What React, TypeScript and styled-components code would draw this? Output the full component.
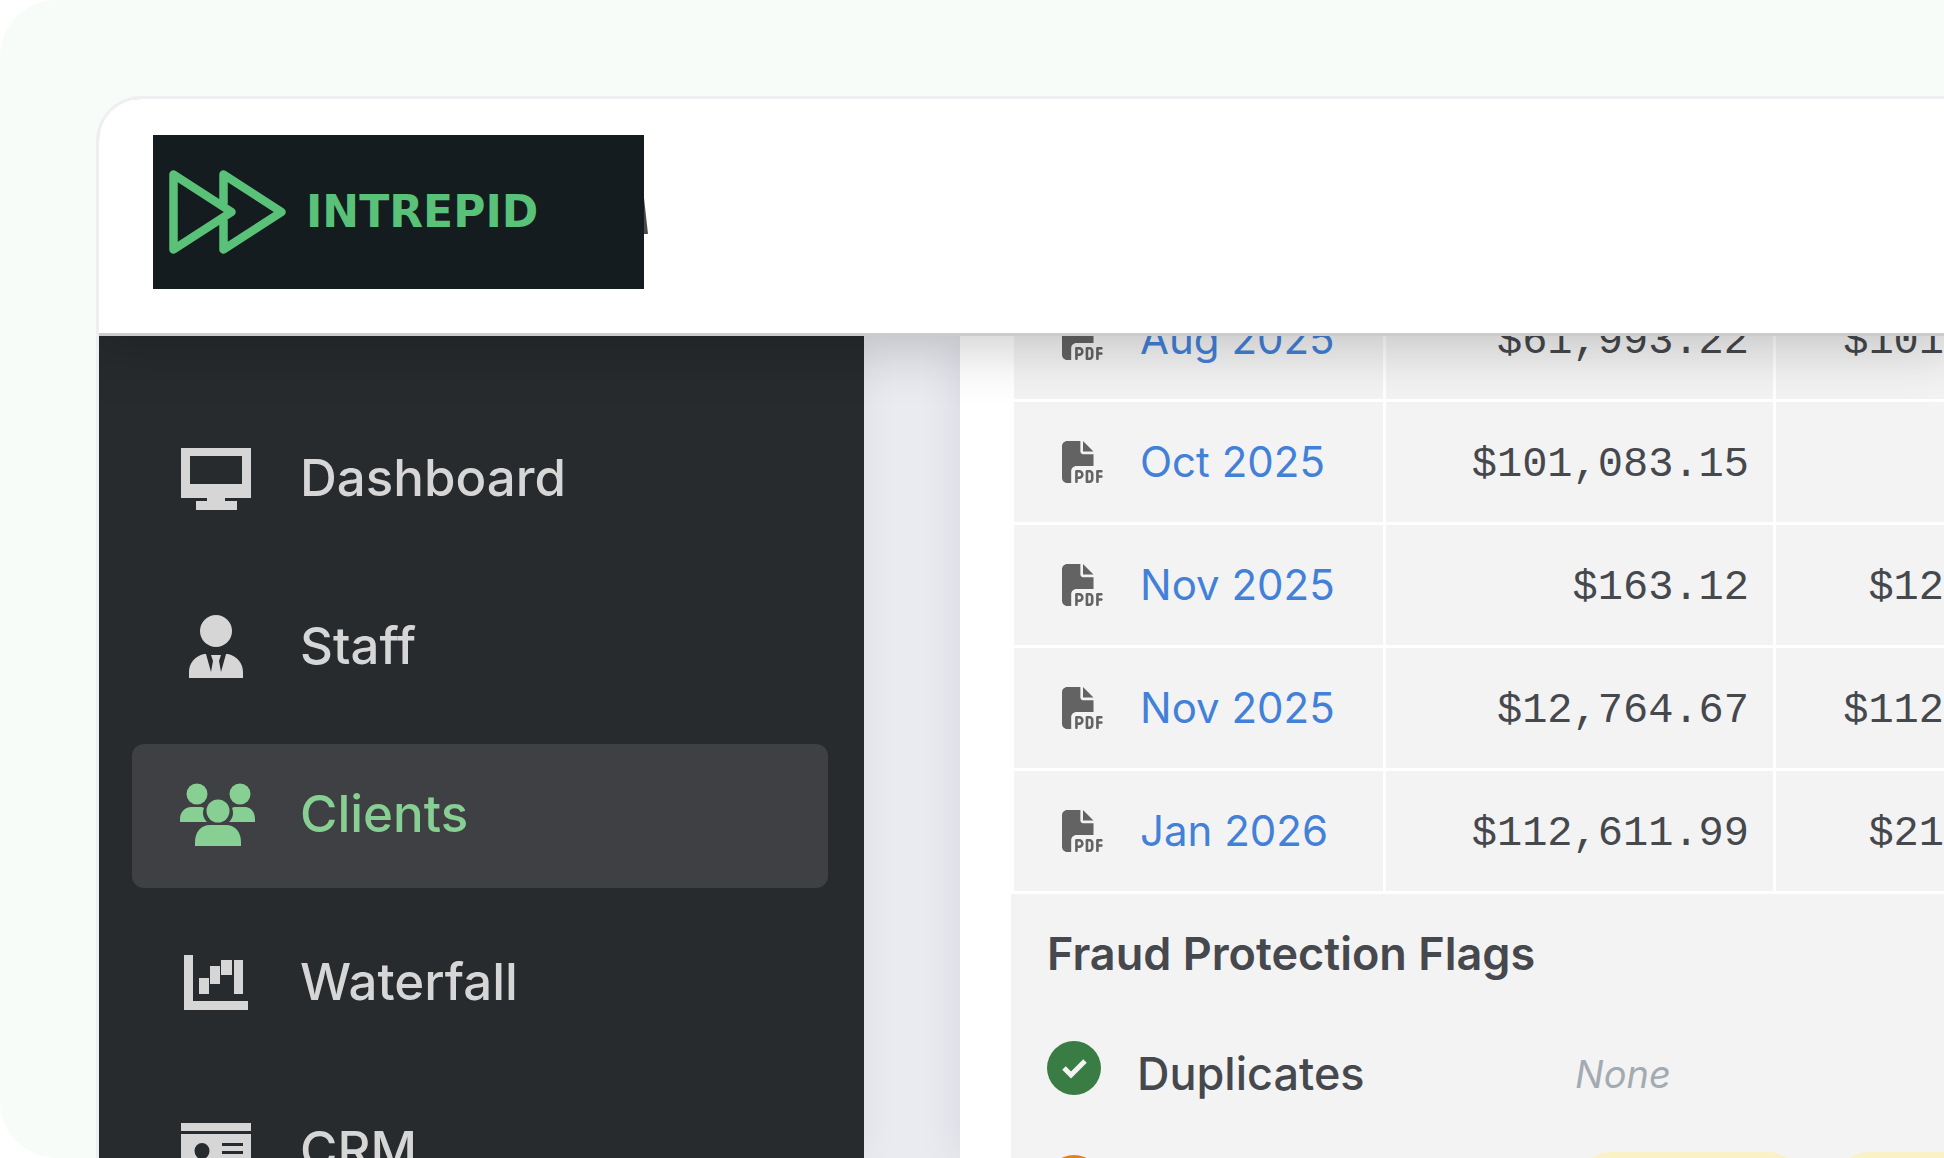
import React from "react";
import styled, { createGlobalStyle } from "styled-components";
import { FaFilePdf } from "react-icons/fa6";

const GlobalStyle = createGlobalStyle`
  *, *::before, *::after { box-sizing: border-box; }
  body {
    margin: 0;
    background: #ffffff;
    font-family: Inter, "Noto Sans", sans-serif;
    color: #45484c;
  }
`;

const Page = styled.div`
  height: 100vh;
  padding: 96px 0 0 96px;
  overflow: hidden;
  background: #f7fcf8;
  border-radius: 57px 0 0 57px;
`;

const Window = styled.div`
  display: flex;
  flex-direction: column;
  height: 100%;
  overflow: hidden;
  background: #eaebf0;
  border: solid #efeef3;
  border-width: 3px 0 0 3px;
  border-radius: 45px 0 0 0;
`;

const Header = styled.header`
  position: relative;
  z-index: 2;
  flex: none;
  display: flex;
  height: 237px;
  padding: 36px 54px;
  background: #ffffff;
  border-bottom: 3px solid #cacbca;
  box-shadow: 0 0 54px 12px rgba(0, 0, 0, 0.2);
`;

const Logo = styled.a`
  position: relative;
  display: flex;
  align-items: center;
  gap: 18px;
  width: 491px;
  height: 154px;
  padding-left: 15px;
  background: #151c1f;
  color: #5ac178;
  text-decoration: none;
`;

const LogoMark = styled.svg`
  flex: none;
  width: 120px;
  height: 90px;
`;

const LogoName = styled.span`
  font-family: "DejaVu Sans", sans-serif;
  font-size: 44px;
  line-height: 48px;
  font-weight: 700;
`;

const LogoEdge = styled.svg`
  position: absolute;
  left: 100%;
  top: 63px;
  width: 4px;
  height: 36px;
`;

const Body = styled.div`
  flex: 1;
  min-height: 0;
  display: flex;
  gap: 96px;
  overflow: hidden;
`;

const Sidebar = styled.nav`
  flex: none;
  display: flex;
  flex-direction: column;
  gap: 24px;
  width: 765px;
  padding: 72px 36px 0 33px;
  background: #272b2d;
  box-shadow: 0 0 36px rgba(20, 20, 50, 0.06);
`;

const NavItem = styled.a<{ $active?: boolean }>`
  flex: none;
  display: flex;
  align-items: center;
  gap: 48px;
  height: 144px;
  padding-left: 48px;
  border-radius: 12px;
  background: ${(p) => (p.$active ? "#3e4043" : "transparent")};
  color: ${(p) => (p.$active ? "#87cf93" : "#d6d6d6")};
  text-decoration: none;
`;

const NavIcon = styled.svg`
  flex: none;
  width: 72px;
  height: 72px;
  overflow: visible;
  fill: currentColor;
`;

const NavLabel = styled.span`
  padding-bottom: 4px;
  font-size: 51px;
  line-height: 60px;
  font-weight: 500;
`;

const Panel = styled.main`
  flex: 1;
  min-width: 0;
  padding-left: 51px;
  background: #ffffff;
  box-shadow: 0 0 42px rgba(20, 20, 50, 0.09);
`;

const Statements = styled.table`
  width: calc(100% + 3px);
  margin-top: -60px;
  table-layout: fixed;
  border-spacing: 3px;
`;

const MonthCol = styled.col`
  width: 369px;
`;

const AmountCol = styled.col`
  width: 387px;
`;

const MonthCell = styled.td`
  height: 120px;
  padding: 0 0 0 48px;
  background: #f3f3f3;
`;

const MonthLine = styled.div`
  display: flex;
  align-items: center;
  gap: 36px;
  color: #636363;
`;

const MonthLink = styled.a`
  color: #4380d8;
  font-size: 42px;
  line-height: 48px;
  text-decoration: none;
`;

const AmountCell = styled.td<{ $flush?: boolean }>`
  padding: 6px ${(p) => (p.$flush ? 0 : 24)}px 0 0;
  background: #f3f3f3;
  color: #45484c;
  font-family: "Liberation Mono", monospace;
  font-size: 42px;
  line-height: 48px;
  text-align: right;
`;

const Flags = styled.section`
  padding: 30px 0 48px 36px;
  background: #f3f3f3;
`;

const FlagsTitle = styled.h2`
  margin: 0 0 57px;
  font-size: 45px;
  line-height: 60px;
  font-weight: 600;
`;

const FlagList = styled.div`
  display: flex;
  flex-direction: column;
  gap: 48px;
`;

const FlagRow = styled.div`
  display: flex;
  height: 66px;
`;

const FlagIcon = styled.svg`
  flex: none;
  width: 54px;
  height: 54px;
  margin-right: 36px;
`;

const FlagLabel = styled.span`
  flex: none;
  width: 438px;
  font-size: 45px;
  line-height: 66px;
  font-weight: 500;
`;

const FlagNone = styled.em`
  color: #a3abb2;
  font-size: 38px;
  line-height: 66px;
`;

const Pills = styled.div`
  display: flex;
  align-items: center;
  gap: 30px;
`;

const Pill = styled.span`
  flex: none;
  width: 228px;
  height: 72px;
  border-radius: 36px;
  background: #fbf1c6;
`;

const DashboardIcon = () => (
  <NavIcon viewBox="0 0 72 72" aria-hidden="true">
    <path fillRule="evenodd" d="M1 4H71V54H45V57H57V66H16V57H27V54H1ZM10 12V40H62V12Z" />
  </NavIcon>
);

const StaffIcon = () => (
  <NavIcon viewBox="0 0 72 72" aria-hidden="true">
    <circle cx="36" cy="19" r="16" />
    <path d="M9 66V60C9 51 15 44 24 42H26L31 60L33 49L31 43H41L39 49L41 60L46 42H48C57 44 63 51 63 60V66Z" />
  </NavIcon>
);

const ClientsIcon = () => (
  <NavIcon viewBox="0 0 72 72" aria-hidden="true">
    <circle cx="17" cy="14" r="10.5" />
    <circle cx="60" cy="14" r="10.5" />
    <circle cx="38" cy="31" r="11.5" />
    <path d="M0 42V39C0 32 5 27 11 27H20C22 27 23 27 24 28C22 33 23 38 27 42Z" />
    <path d="M75 42V39C75 32 71 27 65 27H56C54 27 53 27 52 28C54 33 53 38 49 42Z" />
    <path d="M15 66V62C15 52 21 45 30 45H46C55 45 61 52 61 62V66Z" />
  </NavIcon>
);

const WaterfallIcon = () => (
  <NavIcon viewBox="0 0 72 72" aria-hidden="true">
    <path d="M4 7H13V53H68V62H4Z" />
    <path d="M19 30H29V46H19ZM30 18H40V36H30ZM41 12H52V27H41ZM54 12H63V46H54Z" />
  </NavIcon>
);

const CrmIcon = () => (
  <NavIcon viewBox="0 0 72 72" aria-hidden="true">
    <path d="M1 7H71V15H1Z" />
    <path
      fillRule="evenodd"
      d="M1 18H71V66H1ZM22 27A7.5 8 0 1 0 22 43A7.5 8 0 1 0 22 27ZM42 27H63V30H42ZM42 35H63V38H42ZM10 57C10 50 14 47 18 47H27C31 47 35 50 35 57Z"
    />
  </NavIcon>
);

const navItems = [
  { label: "Dashboard", Icon: DashboardIcon },
  { label: "Staff", Icon: StaffIcon },
  { label: "Clients", Icon: ClientsIcon, active: true },
  { label: "Waterfall", Icon: WaterfallIcon },
  { label: "CRM", Icon: CrmIcon },
];

const statements = [
  { month: "Aug 2025", amount: "$61,993.22", next: "$101" },
  { month: "Oct 2025", amount: "$101,083.15", next: "" },
  { month: "Nov 2025", amount: "$163.12", next: "$12" },
  { month: "Nov 2025", amount: "$12,764.67", next: "$112" },
  { month: "Jan 2026", amount: "$112,611.99", next: "$21" },
];

export default function App() {
  return (
    <>
      <GlobalStyle />
      <Page>
        <Window>
          <Header>
            <Logo href="#">
              <LogoMark viewBox="0 0 120 90" fill="none" stroke="currentColor" strokeWidth="8.5" strokeLinejoin="round" aria-hidden="true">
                <path d="M5.5 7.5V82.5L63.5 45Z" />
                <path d="M55.5 37V7.5L113.5 45L55.5 82.5V53" />
              </LogoMark>
              <LogoName>INTREPID</LogoName>
              <LogoEdge viewBox="0 0 4 36" aria-hidden="true">
                <path d="M0 0L4 36H0Z" fill="#4a4a4a" />
              </LogoEdge>
            </Logo>
          </Header>
          <Body>
            <Sidebar>
              {navItems.map(({ label, Icon, active }) => (
                <NavItem key={label} href="#" $active={active}>
                  <Icon />
                  <NavLabel>{label}</NavLabel>
                </NavItem>
              ))}
            </Sidebar>
            <Panel>
              <Statements>
                <colgroup>
                  <MonthCol />
                  <AmountCol />
                  <col />
                </colgroup>
                <tbody>
                  {statements.map((row, i) => (
                    <tr key={i}>
                      <MonthCell>
                        <MonthLine>
                          <FaFilePdf size={42} aria-hidden="true" />
                          <MonthLink href="#">{row.month}</MonthLink>
                        </MonthLine>
                      </MonthCell>
                      <AmountCell>{row.amount}</AmountCell>
                      <AmountCell $flush>{row.next}</AmountCell>
                    </tr>
                  ))}
                </tbody>
              </Statements>
              <Flags>
                <FlagsTitle>Fraud Protection Flags</FlagsTitle>
                <FlagList>
                  <FlagRow>
                    <FlagIcon viewBox="0 0 54 54" aria-hidden="true">
                      <circle cx="27" cy="27" r="27" fill="#3a7d44" />
                      <path d="M17 27L24 34L38 20" fill="none" stroke="#f3f3f3" strokeWidth="5" />
                    </FlagIcon>
                    <FlagLabel>Duplicates</FlagLabel>
                    <FlagNone>None</FlagNone>
                  </FlagRow>
                  <FlagRow>
                    <FlagIcon viewBox="0 0 54 54" aria-hidden="true">
                      <circle cx="27" cy="27" r="27" fill="#e0821c" />
                    </FlagIcon>
                    <FlagLabel />
                    <Pills>
                      <Pill />
                      <Pill />
                    </Pills>
                  </FlagRow>
                </FlagList>
              </Flags>
            </Panel>
          </Body>
        </Window>
      </Page>
    </>
  );
}
